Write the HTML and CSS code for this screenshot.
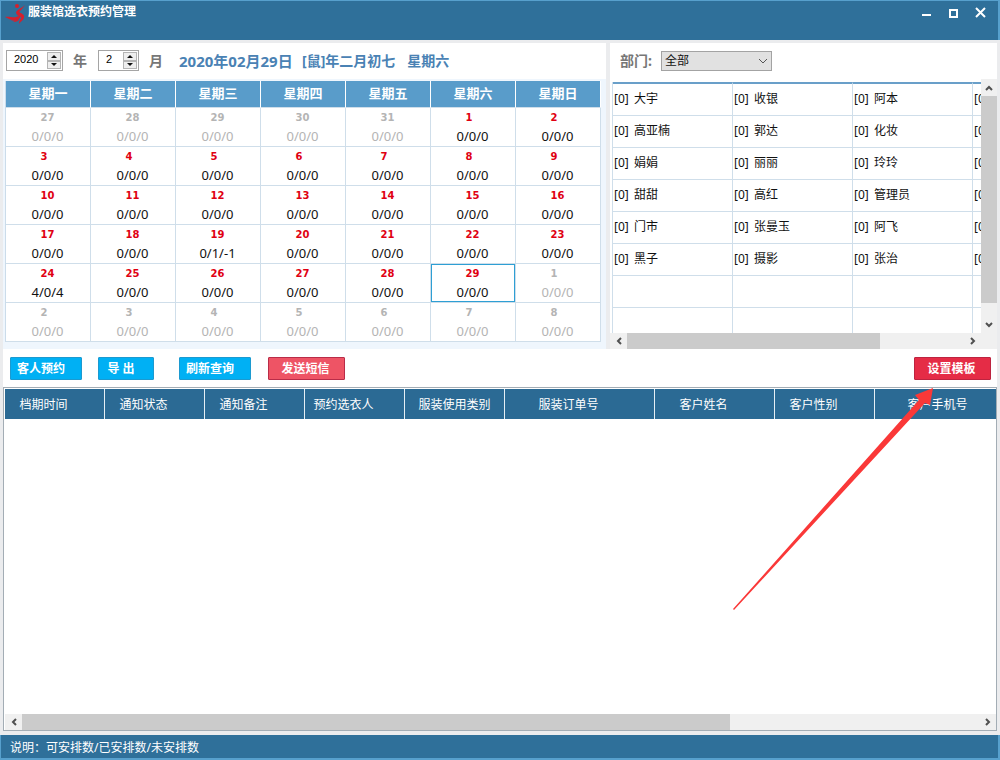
FILE: index.html
```html
<!DOCTYPE html>
<html lang="zh-CN">
<head>
<meta charset="utf-8">
<title>服装馆选衣预约管理</title>
<link rel="stylesheet" href="styles.css">
</head>
<body>
<div class="window">
  <header class="titlebar">
    <svg class="logo" viewBox="0 0 23 24" aria-hidden="true">
      <circle cx="12" cy="3" r="2"/>
      <path d="M20 2 C18 5 16 7 14 9 C16 10 20 12 19 14 C19 17 16 18 14 21 C14 17 17 15 16 14 C14 13 11 12 11 9 C13 6 17 5 20 2Z"/>
      <path d="M0 14 C4 13 8 15 11 14 C13 13 14 13 16 13 C14 17 11 18 8 17 C5 17 3 15 0 14Z"/>
      <path d="M6 17 C9 18 11 17 14 16 C13 19 10 20 6 17Z"/>
    </svg>
    <h1>服装馆选衣预约管理</h1>
    <div class="window-buttons">
      <button type="button" aria-label="最小化"><svg viewBox="0 0 12 12"><path d="M1 9H10"/></svg></button>
      <button type="button" aria-label="最大化"><svg viewBox="0 0 12 12"><path d="M2 4H9V11H2Z"/></svg></button>
      <button type="button" aria-label="关闭"><svg viewBox="0 0 12 12"><path d="M1 2L10 11M10 2L1 11"/></svg></button>
    </div>
  </header>

  <main>
    <div class="panels">
      <section class="calendar-panel">
        <div class="strip">
          <span class="spinner year">
            <input id="year" type="text" value="2020">
            <span class="steps"><button type="button" aria-label="下一年"><i class="up"></i></button><button type="button" aria-label="上一年"><i class="down"></i></button></span>
          </span>
          <label for="year">年</label>
          <span class="spinner month">
            <input id="month" type="text" value="2">
            <span class="steps"><button type="button" aria-label="下一月"><i class="up"></i></button><button type="button" aria-label="上一月"><i class="down"></i></button></span>
          </span>
          <label for="month">月</label>
          <p class="today"><strong>2020年02月29日</strong><span>[鼠]年二月初七</span><span>星期六</span></p>
        </div>
        <table class="calendar">
          <thead>
            <tr><th>星期一</th><th>星期二</th><th>星期三</th><th>星期四</th><th>星期五</th><th>星期六</th><th>星期日</th></tr>
          </thead>
          <tbody>
            <tr><td class="off"><b>27</b><span>0/0/0</span></td><td class="off"><b>28</b><span>0/0/0</span></td><td class="off"><b>29</b><span>0/0/0</span></td><td class="off"><b>30</b><span>0/0/0</span></td><td class="off"><b>31</b><span>0/0/0</span></td><td><b>1</b><span>0/0/0</span></td><td><b>2</b><span>0/0/0</span></td></tr>
            <tr><td><b>3</b><span>0/0/0</span></td><td><b>4</b><span>0/0/0</span></td><td><b>5</b><span>0/0/0</span></td><td><b>6</b><span>0/0/0</span></td><td><b>7</b><span>0/0/0</span></td><td><b>8</b><span>0/0/0</span></td><td><b>9</b><span>0/0/0</span></td></tr>
            <tr><td><b>10</b><span>0/0/0</span></td><td><b>11</b><span>0/0/0</span></td><td><b>12</b><span>0/0/0</span></td><td><b>13</b><span>0/0/0</span></td><td><b>14</b><span>0/0/0</span></td><td><b>15</b><span>0/0/0</span></td><td><b>16</b><span>0/0/0</span></td></tr>
            <tr><td><b>17</b><span>0/0/0</span></td><td><b>18</b><span>0/0/0</span></td><td><b>19</b><span>0/1/-1</span></td><td><b>20</b><span>0/0/0</span></td><td><b>21</b><span>0/0/0</span></td><td><b>22</b><span>0/0/0</span></td><td><b>23</b><span>0/0/0</span></td></tr>
            <tr><td><b>24</b><span>4/0/4</span></td><td><b>25</b><span>0/0/0</span></td><td><b>26</b><span>0/0/0</span></td><td><b>27</b><span>0/0/0</span></td><td><b>28</b><span>0/0/0</span></td><td class="selected"><b>29</b><span>0/0/0</span></td><td class="off"><b>1</b><span>0/0/0</span></td></tr>
            <tr><td class="off"><b>2</b><span>0/0/0</span></td><td class="off"><b>3</b><span>0/0/0</span></td><td class="off"><b>4</b><span>0/0/0</span></td><td class="off"><b>5</b><span>0/0/0</span></td><td class="off"><b>6</b><span>0/0/0</span></td><td class="off"><b>7</b><span>0/0/0</span></td><td class="off"><b>8</b><span>0/0/0</span></td></tr>
          </tbody>
        </table>
      </section>

      <section class="staff-panel">
        <div class="strip">
          <label for="dept">部门:</label>
          <span class="select">
            <select id="dept"><option>全部</option></select>
            <svg viewBox="0 0 12 12" aria-hidden="true"><path d="M2 4L6 8L10 4"/></svg>
          </span>
        </div>
        <div class="staff-area">
          <div class="staff-view">
            <table class="staff">
              <tbody>
                <tr><td><span>[0]</span>大宇</td><td><span>[0]</span>收银</td><td><span>[0]</span>阿本</td><td><span>[0]</span></td></tr>
                <tr><td><span>[0]</span>高亚楠</td><td><span>[0]</span>郭达</td><td><span>[0]</span>化妆</td><td><span>[0]</span></td></tr>
                <tr><td><span>[0]</span>娟娟</td><td><span>[0]</span>丽丽</td><td><span>[0]</span>玲玲</td><td><span>[0]</span></td></tr>
                <tr><td><span>[0]</span>甜甜</td><td><span>[0]</span>高红</td><td><span>[0]</span>管理员</td><td><span>[0]</span></td></tr>
                <tr><td><span>[0]</span>门市</td><td><span>[0]</span>张曼玉</td><td><span>[0]</span>阿飞</td><td><span>[0]</span></td></tr>
                <tr><td><span>[0]</span>黑子</td><td><span>[0]</span>摄影</td><td><span>[0]</span>张治</td><td><span>[0]</span></td></tr>
                <tr><td></td><td></td><td></td><td></td></tr>
                <tr><td></td><td></td><td></td><td></td></tr>
              </tbody>
            </table>
          </div>
          <div class="scroll vertical">
            <button type="button" aria-label="向上"><svg viewBox="0 0 12 12"><path d="M3 8L6 5L9 8"/></svg></button>
            <span class="track"><span class="thumb staff-v"></span></span>
            <button type="button" aria-label="向下"><svg viewBox="0 0 12 12"><path d="M3 4L6 7L9 4"/></svg></button>
          </div>
          <div class="scroll horizontal">
            <button type="button" aria-label="向左"><svg viewBox="0 0 12 12"><path d="M8 3L5 6L8 9"/></svg></button>
            <span class="track"><span class="thumb staff-h"></span></span>
            <button type="button" aria-label="向右"><svg viewBox="0 0 12 12"><path d="M4 3L7 6L4 9"/></svg></button>
          </div>
        </div>
      </section>
    </div>

    <div class="actions">
      <button type="button" class="btn">客人预约</button>
      <button type="button" class="btn narrow">导 出</button>
      <button type="button" class="btn refresh">刷新查询</button>
      <button type="button" class="btn rose">发送短信</button>
      <button type="button" class="btn crimson">设置模板</button>
    </div>

    <section class="records">
      <table>
        <colgroup><col class="c100"><col class="c100"><col class="c100"><col class="c100"><col class="c100"><col class="c150"><col class="c120"><col class="c100"><col></colgroup>
        <thead>
          <tr><th>档期时间</th><th>通知状态</th><th>通知备注</th><th>预约选衣人</th><th class="mid">服装使用类别</th><th>服装订单号</th><th>客户姓名</th><th>客户性别</th><th class="last">客户手机号</th></tr>
        </thead>
      </table>
      <div class="scroll horizontal">
        <button type="button" aria-label="向左"><svg viewBox="0 0 12 12"><path d="M8 3L5 6L8 9"/></svg></button>
        <span class="track"><span class="thumb records-h"></span></span>
        <button type="button" aria-label="向右"><svg viewBox="0 0 12 12"><path d="M4 3L7 6L4 9"/></svg></button>
      </div>
      <svg class="pointer" viewBox="0 0 204 224" aria-hidden="true"><path d="M1 222L187 13L183 8L201 1L198 18L193 16L2 223Z"/></svg>
    </section>
  </main>

  <footer class="statusbar">说明：可安排数/已安排数/未安排数</footer>
</div>
</body>
</html>
```

FILE: styles.css
```css
* { box-sizing: border-box; }

body {
  margin: 0;
  font: 12px/16px "Noto Sans", "Noto Sans CJK SC", sans-serif;
  color: #111;
}

button, input, select { font: inherit; margin: 0; padding: 0; }
h1, p { margin: 0; }
table { border-collapse: separate; border-spacing: 0; table-layout: fixed; }

.window {
  display: flex;
  flex-direction: column;
  min-height: 100vh;
  background: #ebecee;
}

.titlebar {
  display: flex;
  align-items: flex-start;
  height: 40px;
  padding: 2px 11px 0 4px;
  border: solid #57a0cd;
  border-width: 1px 2px 0 1px;
  background: #2f709a;
}
.logo { width: 23px; height: 24px; fill: #d5202d; }
.titlebar h1 {
  flex: 1;
  padding-top: 1px;
  color: #fff;
  font-size: 12px;
  font-weight: 700;
}
.window-buttons { display: flex; gap: 15px; padding-top: 3px; }
.window-buttons button { display: flex; border: 0; background: none; }
.window-buttons svg { width: 12px; height: 12px; fill: none; stroke: #fff; stroke-width: 2; }

main {
  flex: 1;
  display: flex;
  flex-direction: column;
  padding: 3px 3px 4px;
}

.panels { display: flex; gap: 4px; }
.calendar-panel { flex: 603 1 0; min-width: 0; background: #eff6fd; }
.staff-panel { flex: 387 1 0; min-width: 0; display: flex; flex-direction: column; background: #fff; }

.strip {
  display: flex;
  align-items: center;
  height: 36px;
  padding: 0 3px 1px;
  background: #fff;
}
.strip label { color: #777; font-size: 14px; font-weight: 700; }

.spinner {
  display: flex;
  height: 21px;
  padding: 1px;
  border: 1px solid #a5a5a5;
  background: #fff;
}
.spinner input {
  flex: 1;
  min-width: 0;
  padding: 0 0 3px 6px;
  border: 0;
  font: 11px/14px "Liberation Sans", sans-serif;
}
.year { width: 57px; }
.month { width: 41px; }
.spinner + label { width: 35px; padding-left: 10px; }
.steps { display: flex; flex-direction: column; width: 14px; }
.steps button {
  flex: 1;
  display: flex;
  align-items: center;
  justify-content: center;
  border: 1px solid #b4b4b4;
  background: #eee;
}
.steps i { border: 3px solid transparent; border-block-width: 0; }
.steps .up { border-bottom: 3px solid #111; }
.steps .down { border-top: 3px solid #111; }

.today { display: flex; align-items: center; padding-left: 5px; color: #4a82b4; font-size: 14px; }
.today strong { width: 123px; font-size: 15px; white-space: nowrap; }
.today span { margin-right: 12px; white-space: nowrap; font-weight: 700; }

.calendar {
  width: calc(100% - 7px);
  margin: 2px 5px 7px 2px;
  border-left: 1px solid #cbdcea;
  background: #fff;
  text-align: center;
}
.calendar th {
  height: 27px;
  padding: 0 0 3px;
  border-right: 1px solid #fff;
  border-bottom: 1px solid #cfdeea;
  background: #599cca;
  color: #fff;
  font-size: 13px;
  font-weight: 700;
}
.calendar td {
  height: 39px;
  padding: 0 1px 0 0;
  border: solid #cfdeea;
  border-width: 0 1px 1px 0;
}
.calendar b {
  display: block;
  width: 14px;
  margin: 0 auto;
  color: #e00012;
  font: 700 10px/19px "DejaVu Sans", sans-serif;
  text-align: left;
}
.calendar span { display: block; font-size: 13px; line-height: 19px; }
.calendar .off b, .calendar .off span { color: #b4b4b4; }
.calendar .selected { box-shadow: inset 0 0 0 1px #2e9fd4; }

.staff-panel .strip { padding-left: 10px; gap: 9px; }
.select { display: flex; align-items: center; }
.select select {
  appearance: none;
  width: 111px;
  height: 20px;
  padding: 0 20px 0 3px;
  border: 1px solid #a3a3a3;
  border-radius: 0;
  background: #e1e1e1;
  color: #111;
}
.select svg { width: 12px; height: 12px; margin-left: -15px; fill: none; stroke: #555; pointer-events: none; }

.staff-area {
  flex: 1;
  display: grid;
  grid-template-columns: 1fr 16px;
  grid-template-rows: 1fr 16px;
  background: #f0f0f0;
}
.staff-view {
  overflow: hidden;
  height: 254px;
  padding: 3px 0 0 2px;
  background: #fff;
}
.staff { width: 481px; border-left: 1px solid #cfdeea; }
.staff td {
  height: 32px;
  padding: 0 1px 2px;
  border: solid #cfdeea;
  border-width: 0 1px 1px 0;
  white-space: nowrap;
}
.staff span { display: inline-block; width: 20px; }
.staff tr:first-child td { height: 34px; border-top: 2px solid #699fc9; }

.scroll { display: flex; background: #f0f0f0; }
.scroll button { display: flex; align-items: center; justify-content: center; width: 17px; height: 16px; border: 0; background: none; }
.scroll svg { width: 12px; height: 12px; fill: none; stroke: #505050; stroke-width: 2; }
.scroll .track { flex: 1; display: flex; }
.scroll .thumb { background: #cbcbcb; }
.vertical { flex-direction: column; }
.vertical .track { flex-direction: column; }
.vertical button { width: 16px; height: 17px; }
.staff-v { height: 94%; }
.staff-h { width: 75%; }
.records-h { width: 74%; }

.actions {
  display: flex;
  align-items: center;
  height: 38px;
  padding: 0 6px 0 7px;
  background: #fff;
}
.btn {
  width: 72px;
  height: 23px;
  margin-right: 16px;
  padding: 2px 10px 0 0;
  border: 1px solid #1c9ad0;
  border-radius: 1px;
  background: #00b0f4;
  color: #fff;
  font-weight: 700;
}
.narrow { width: 56px; margin-right: 25px; }
.refresh { margin-right: 17px; }
.rose { width: 77px; padding: 2px 2px 0 0; border-color: #b92c48; background: #ee5465; }
.crimson { width: 77px; margin: 0 0 0 auto; padding: 2px 2px 0 0; border-color: #bd2440; background: #e52c46; }

.records {
  position: relative;
  flex: 1;
  display: flex;
  flex-direction: column;
  justify-content: space-between;
  padding: 1px 0 0 1px;
  border: 1px solid #a3adb5;
  background: #fff;
}
.records table { width: 100%; }
.records th {
  height: 30px;
  padding: 2px 22px 0 0;
  border-right: 1px solid #e6eff5;
  background: #2b6a94;
  color: #fff;
  font-weight: 400;
  white-space: nowrap;
}
.records .mid { padding: 2px 0 0; }
.records .last { padding: 2px 0 0 4px; border-right: 0; }
.c100 { width: 100px; }
.c120 { width: 120px; }
.c150 { width: 150px; }

.pointer {
  position: absolute;
  top: -1px;
  right: 60px;
  width: 204px;
  height: 224px;
  fill: #fa3838;
  pointer-events: none;
}

.statusbar {
  height: 25px;
  padding: 5px 9px 0;
  border: solid #57a0cd;
  border-width: 0 2px 2px 1px;
  background: #2f709a;
  color: #fff;
}
```
